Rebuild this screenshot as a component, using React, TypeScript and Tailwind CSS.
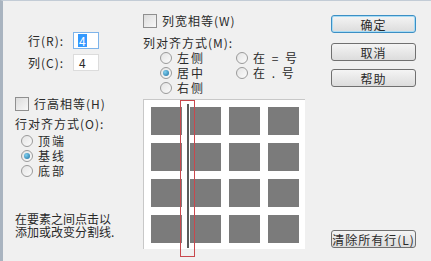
import React from 'react'

const font = { fontFamily: '"Noto Sans CJK SC", "Liberation Sans", sans-serif' }

function Radio({ checked, label }: { checked?: boolean; label: string }) {
  return (
    <div className="flex items-center gap-[5px] h-[15px]">
      <span className="w-[12px] h-[12px] rounded-full border border-[#9a9a9a] bg-gradient-to-br from-[#e4e4e4] to-[#fbfbfb] flex items-center justify-center">
        {checked && <span className="w-[6px] h-[6px] rounded-full bg-[radial-gradient(circle_at_35%_35%,#7fd0f0,#1f6f9f)]" />}
      </span>
      <span className="tracking-[2px] leading-[13px]">{label}</span>
    </div>
  )
}

function Checkbox({ label }: { label: string }) {
  return (
    <div className="flex items-center gap-[5px] h-[15px]">
      <span className="w-[14px] h-[14px] border border-[#8f8f8f] bg-gradient-to-br from-[#dcdcdc] to-[#f8f8f8]" />
      <span className="tracking-[1px]">{label}</span>
    </div>
  )
}

function Btn({ label, primary, className = '' }: { label: string; primary?: boolean; className?: string }) {
  return (
    <div
      className={
        'w-[85px] h-[18px] rounded-[3px] border flex items-center justify-center bg-gradient-to-b from-[#f4f4f4] to-[#dcdcdc] ' +
        (primary ? 'border-[#3c8fc4] shadow-[inset_0_0_0_1px_#a8dcf5] ' : 'border-[#707070] ') +
        className
      }
    >
      <span className="tracking-[1px]">{label}</span>
    </div>
  )
}

export default function App() {
  const rows = [0, 1, 2, 3]
  return (
    <div
      style={font}
      className="w-[431px] h-[261px] bg-[#f0f0f0] border-l-[3px] border-t border-l-[#a9b4c0] border-t-[#c3ccd6] text-[12px] leading-[15px] text-[#2a2a2a] flex overflow-hidden"
    >
      {/* left column */}
      <div className="w-[140px] pl-[12px] flex flex-col">
        <div className="mt-[31px] flex items-center h-[17px]">
          <span className="w-[58px] pl-[13px] tracking-[1px]">行(R):</span>
          <span className="w-[26px] h-[17px] border border-[#7eb4ea] bg-white flex items-center pl-[4px]">
            <span className="bg-[#3399ff] text-white px-[1px] leading-[13px]">4</span>
          </span>
        </div>
        <div className="mt-[5px] flex items-center h-[17px]">
          <span className="w-[58px] pl-[13px] tracking-[1px]">列(C):</span>
          <span className="w-[26px] h-[17px] border border-[#dcdcdc] bg-white flex items-center pl-[5px]">4</span>
        </div>
        <div className="mt-[25px]">
          <Checkbox label="行高相等(H)" />
        </div>
        <div className="mt-[5px] h-[15px] tracking-[1px]">行对齐方式(O):</div>
        <div className="mt-[2px] pl-[6px] flex flex-col">
          <Radio label="顶端" />
          <Radio checked label="基线" />
          <Radio label="底部" />
        </div>
        <div className="mt-[34px] leading-[13px]">
          在要素之间点击以
          <br />
          添加或改变分割线.
        </div>
      </div>

      {/* middle column */}
      <div className="w-[162px] flex flex-col">
        <div className="mt-[12px]">
          <Checkbox label="列宽相等(W)" />
        </div>
        <div className="mt-[7px] h-[15px] tracking-[1px]">列对齐方式(M):</div>
        <div className="pl-[17px] flex gap-[31px]">
          <div className="flex flex-col">
            <Radio label="左侧" />
            <Radio checked label="居中" />
            <Radio label="右侧" />
          </div>
          <div className="flex flex-col">
            <Radio label="在 = 号" />
            <Radio label="在 . 号" />
          </div>
        </div>
        <div className="mt-[4px] w-[162px] h-[150px] bg-white border-l border-t border-[#c8c8c8] relative">
          <div className="grid grid-cols-[31px_31px_31px_31px] grid-rows-[28px_28px_28px_28px] gap-x-[8px] gap-y-[8px] pl-[7px] pt-[7px]">
            {rows.map((r) =>
              rows.map((c) => <div key={r + '-' + c} className="bg-[#7b7b7b]" />)
            )}
          </div>
          {/* selected divider */}
          <div className="absolute left-[36px] top-[0px] w-[15px] h-[157px] border border-[#c8484d]" />
          <div className="absolute left-[43px] top-[4px] w-[2px] h-[144px] bg-[#5a5a5a]" />
        </div>
      </div>

      {/* right column */}
      <div className="ml-[26px] flex flex-col">
        <Btn primary label="确定" className="mt-[14px]" />
        <Btn label="取消" className="mt-[10px]" />
        <Btn label="帮助" className="mt-[8px]" />
        <Btn label="清除所有行(L)" className="mt-[143px]" />
      </div>
    </div>
  )
}
